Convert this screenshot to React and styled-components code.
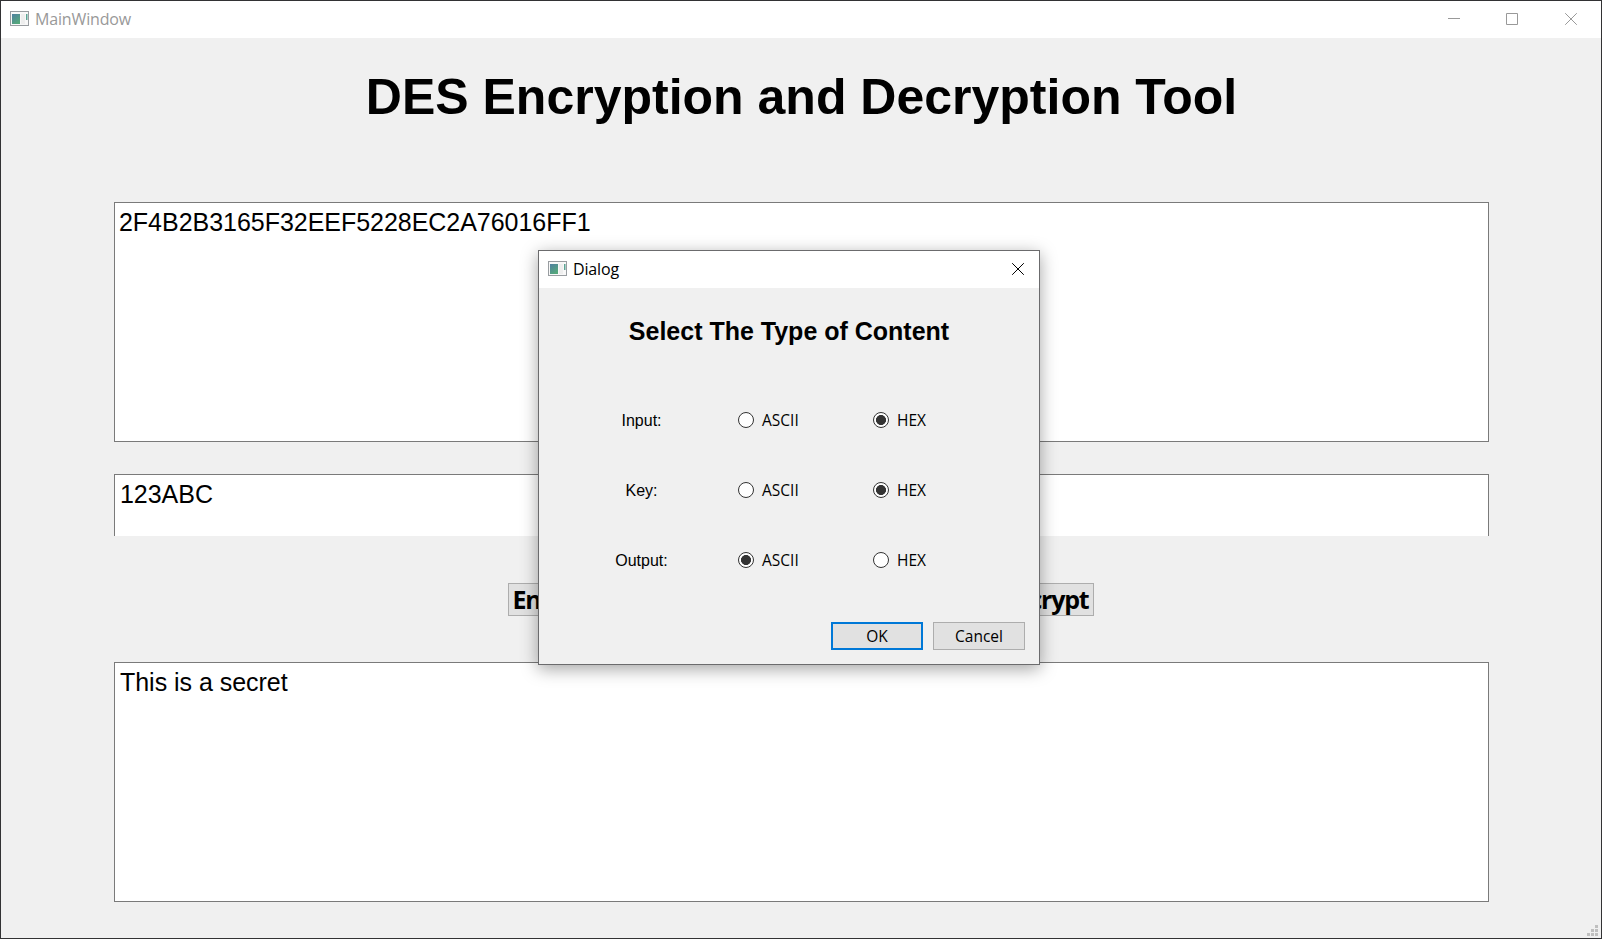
import React, { useState } from "react";
import styled, { createGlobalStyle } from "styled-components";

const ui = '"Open Sans", "Noto Sans", sans-serif';
const arial = '"Liberation Sans", Arial, sans-serif';

const GlobalStyle = createGlobalStyle`
  * { box-sizing: border-box; }
  body { margin: 0; background: #333; overflow: hidden; }
  button, input, textarea { font: inherit; color: inherit; }
`;

const Window = styled.div`
  width: 1602px;
  height: 939px;
  border: 1px solid #323234;
  background: #f0f0f0;
  color: #000;
  display: flex;
  flex-direction: column;
  position: relative;
`;

const TitleBar = styled.header`
  height: 37px;
  flex: none;
  display: flex;
  align-items: center;
  padding: 0 ${(p) => (p.$dialog ? 14 : 23)}px 0 9px;
  background: #fff;
  color: ${(p) => (p.$dialog ? "#000" : "#999")};
  font: 16px/22px ${ui};
  letter-spacing: -0.15px;
`;

const Caption = styled.span`
  margin: 0 0 1px 6px;
  flex: 1;
`;

const Controls = styled.div`
  display: flex;
  gap: 46px;
`;

const ControlIcon = styled.svg`
  width: 13px;
  height: 13px;
  display: block;
  fill: none;
  stroke: currentColor;
`;

const AppIconSvg = styled.svg`
  width: 19px;
  height: 16px;
  flex: none;
  margin-bottom: 1px;
`;

const Content = styled.main`
  flex: 1;
  display: flex;
  flex-direction: column;
  padding: 0 112px 0 113px;
`;

const Title = styled.h1`
  margin: 30px 0 76px;
  text-align: center;
  white-space: nowrap;
  font: bold 50px/58px ${arial};
`;

const TextBox = styled.div`
  height: ${(p) => (p.$single ? 62 : 240)}px;
  flex: none;
  border: 1px solid #7a7a7a;
  border-bottom-width: ${(p) => (p.$single ? 0 : 1)}px;
  background: #fff;
  padding: 4px ${(p) => p.$inset || 5}px;
  font: 25px/30px ${arial};
  letter-spacing: -0.03px;
`;

const KeyRow = styled.div`
  margin-top: 32px;
`;

const Actions = styled.div`
  margin: 47px 2px 46px 0;
  display: flex;
  justify-content: space-between;
  align-self: center;
  width: 586px;
`;

const ActionButton = styled.button`
  height: 33px;
  padding: 0 4px;
  border: 1px solid #adadad;
  background: #e1e1e1;
  font: bold 25px/31px ${ui};
  letter-spacing: -1.2px;
`;

const Grip = styled.svg`
  position: absolute;
  right: 3px;
  bottom: 2px;
  width: 11px;
  height: 11px;
  fill: #bfbfbf;
`;

const DialogWindow = styled.section`
  position: absolute;
  left: 537px;
  top: 249px;
  width: 502px;
  height: 415px;
  display: flex;
  flex-direction: column;
  border: 1px solid #6b6b6d;
  background: #f0f0f0;
  box-shadow: 0 4px 16px rgba(0, 0, 0, 0.36);
`;

const DialogHeading = styled.h2`
  margin: 28px 0 62px;
  text-align: center;
  white-space: nowrap;
  font: bold 25px/30px ${arial};
`;

const Options = styled.div`
  display: flex;
  flex-direction: column;
  gap: 46px;
`;

const OptionRow = styled.div`
  height: 24px;
  display: grid;
  padding-left: 51px;
  grid-template-columns: 148px 135px 100px;
  align-items: center;
`;

const OptionLabel = styled.span`
  width: 103px;
  padding-top: 2px;
  text-align: center;
  font: 16px/20px ${arial};
`;

const RadioLabel = styled.label`
  display: flex;
  align-items: center;
  font: 15.5px/22px ${ui};
`;

const Radio = styled.input.attrs({ type: "radio" })`
  appearance: none;
  width: 16px;
  height: 16px;
  margin: 0 8px 0 0;
  border: 1px solid #333;
  border-radius: 50%;
  background: #fff;
  &:checked {
    background: radial-gradient(circle, #333 0 4.7px, #fff 5.3px);
  }
`;

const DialogButtons = styled.footer`
  display: flex;
  justify-content: flex-end;
  gap: 10px;
  margin: 50px 14px 0 0;
`;

const DialogButton = styled.button`
  width: 92px;
  height: 28px;
  padding: 0;
  border: ${(p) => (p.$primary ? "2px solid #0078d7" : "1px solid #adadad")};
  background: #e1e1e1;
  font: 15.5px/24px ${ui};
`;

const AppIcon = () => (
  <AppIconSvg viewBox="0 0 19 16">
    <defs>
      <linearGradient id="pane" x1="0" y1="0" x2="0.6" y2="1">
        <stop offset="0" stopColor="#4f7fa0" />
        <stop offset="1" stopColor="#55a87b" />
      </linearGradient>
    </defs>
    <rect x="0.5" y="0.5" width="18" height="14" fill="#f8f8f8" stroke="#999da1" />
    <rect x="2" y="3" width="8" height="10" fill="url(#pane)" />
    <rect x="11" y="3" width="4" height="10" fill="#eee" />
    <rect x="16" y="3" width="1.5" height="6" fill="#5ba494" />
  </AppIconSvg>
);

const CloseIcon = () => (
  <ControlIcon viewBox="0 0 13 13">
    <path d="M.2 .2 11.8 11.8M11.8 .2 .2 11.8" />
  </ControlIcon>
);

const fields = [
  { label: "Input:", initial: "HEX" },
  { label: "Key:", initial: "HEX" },
  { label: "Output:", initial: "ASCII" },
];

function Field({ label, initial }) {
  const [value, setValue] = useState(initial);
  return (
    <OptionRow>
      <OptionLabel>{label}</OptionLabel>
      {["ASCII", "HEX"].map((type) => (
        <RadioLabel key={type}>
          <Radio name={label} checked={value === type} onChange={() => setValue(type)} />
          {type}
        </RadioLabel>
      ))}
    </OptionRow>
  );
}

export default function App() {
  return (
    <>
      <GlobalStyle />
      <Window>
        <TitleBar>
          <AppIcon />
          <Caption>MainWindow</Caption>
          <Controls>
            <ControlIcon viewBox="0 0 13 13"><path d="M1 5.5H13" /></ControlIcon>
            <ControlIcon viewBox="0 0 13 13"><path d="M.5 .5H11.5V11.5H.5Z" /></ControlIcon>
            <CloseIcon />
          </Controls>
        </TitleBar>
        <Content>
          <Title>DES Encryption and Decryption Tool</Title>
          <TextBox $inset={4}>2F4B2B3165F32EEF5228EC2A76016FF1</TextBox>
          <KeyRow>
            <TextBox $single>123ABC</TextBox>
          </KeyRow>
          <Actions>
            <ActionButton>Encrypt</ActionButton>
            <ActionButton>Decrypt</ActionButton>
          </Actions>
          <TextBox>This is a secret</TextBox>
        </Content>
        <Grip viewBox="0 0 11 11">
          <path d="M8 0h3v3h-3zM4 4h3v3h-3zM8 4h3v3h-3zM0 8h3v3h-3zM4 8h3v3h-3zM8 8h3v3h-3z" />
        </Grip>
        <DialogWindow>
          <TitleBar $dialog>
            <AppIcon />
            <Caption>Dialog</Caption>
            <CloseIcon />
          </TitleBar>
          <DialogHeading>Select The Type of Content</DialogHeading>
          <Options>
            {fields.map((f) => <Field key={f.label} {...f} />)}
          </Options>
          <DialogButtons>
            <DialogButton $primary>OK</DialogButton>
            <DialogButton>Cancel</DialogButton>
          </DialogButtons>
        </DialogWindow>
      </Window>
    </>
  );
}
